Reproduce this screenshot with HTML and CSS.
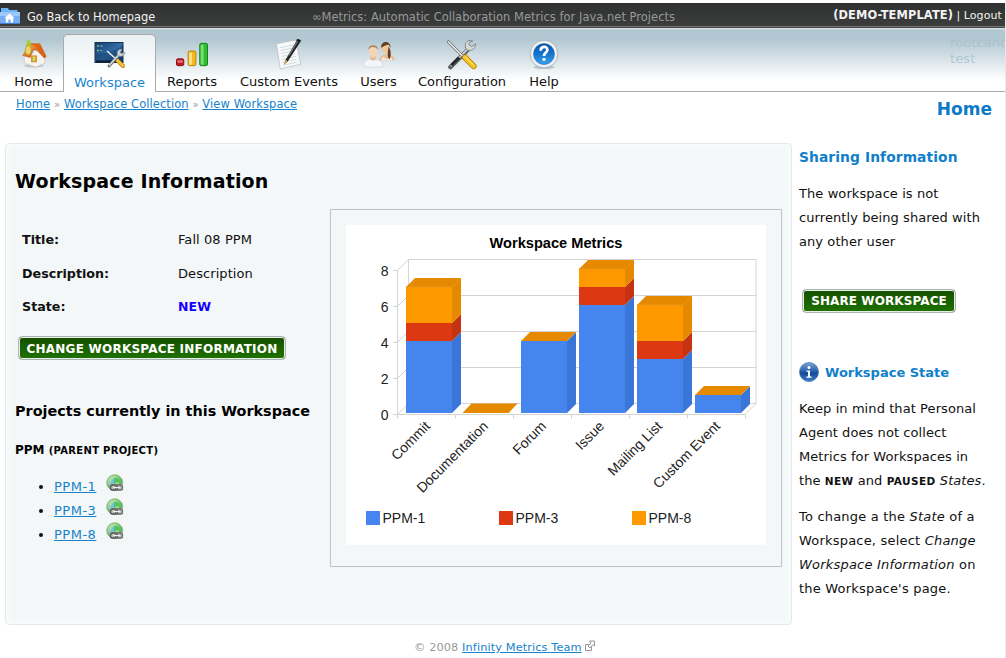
FILE: index.html
```html
<!DOCTYPE html>
<html lang="en">
<head>
<meta charset="utf-8">
<title>∞Metrics: View Workspace</title>
<link rel="stylesheet" href="styles.css">
</head>
<body>
<div class="page">
  <header class="topbar">
    <a class="back" href="#">
      <svg class="folder" width="20" height="18" viewBox="0 0 20 18">
        <path d="M1 1h7l1 2h8.500v4H1z" fill="#6eb3f5"/>
        <path d="M0 5h20v12H0z" fill="#76aef3"/>
        <path d="M0 5h20v4H0z" fill="#9cc8fa"/>
        <path d="M0 16.500h20" stroke="#3f7fd0"/>
        <path d="M9.500 6.500l5 4.500h-1.300v4.500h-2.500v-3H8.300v3H5.800V11H4.500z" fill="#fff"/>
      </svg>
      <span>Go Back to Homepage</span>
    </a>
    <span class="slogan">∞Metrics: Automatic Collaboration Metrics for Java.net Projects</span>
    <span class="account"><b>(DEMO-TEMPLATE)</b> | <a href="#">Logout</a></span>
  </header>

  <div class="header">
    <nav class="nav">
      <a class="item home" href="#">
        <svg width="32" height="32" viewBox="0 0 32 32">
          <defs><linearGradient id="roof" x2="1" y2="1"><stop stop-color="#f7b15e"/><stop offset=".6" stop-color="#e26a12"/><stop offset="1" stop-color="#b94709"/></linearGradient></defs>
          <ellipse cx="16" cy="27.500" rx="10" ry="2" fill="#a8b4b9" opacity=".6"/>
          <path d="M6 17l8 -1 3-5 10 8v6l-9 4-12-4z" fill="#f6f2ee" stroke="#c9c0b8" stroke-width=".6"/>
          <path d="M4.500 17L12 5l10 0 6.500 13-2 1.500-7-8L15 11l-3 8z" fill="url(#roof)" stroke="#b65217" stroke-width=".6"/>
          <path d="M12 5l10 0 6.500 13-2 .5L18 8z" fill="#dc6413"/>
          <rect x="13" y="17" width="6" height="7" fill="#d8842b"/>
          <rect x="14.500" y="18" width="3" height="5" fill="#c8dc58"/>
          <path d="M9 4c-1-4 3-4 3-1 2 0 1 2 0 3 2 2-1 3-3 2-2 0-2-3 0-4z" fill="#a6cf33"/>
          <ellipse cx="10" cy="11.500" rx="3" ry="4.500" fill="#f5cf6d" stroke="#a3ae2b"/>
        </svg>
        <span>Home</span>
      </a>
      <a class="item workspace active" href="#">
        <svg width="32" height="32" viewBox="0 0 32 32">
          <defs><linearGradient id="screen" x2="1" y2="1"><stop stop-color="#173e70"/><stop offset=".55" stop-color="#3370a8"/><stop offset="1" stop-color="#12345f"/></linearGradient></defs>
          <rect x="1" y="4.500" width="28" height="20" fill="url(#screen)" stroke="#173354"/>
          <path d="M1 16c10 0 20-3 28-9v17H1z" fill="#0f325f" opacity=".4"/>
          <path d="M2 23.500h20" stroke="#0b1c33" stroke-width="2"/>
          <path d="M3 8h2M3 12.500h2" stroke="#7cc56b" stroke-width="1.500"/><path d="M6 8h3M6 12.500h2" stroke="#86a8c8"/>
          <path d="M13 13l9 8" stroke="#eee" stroke-width="1.500"/>
          <path d="M23 22l6 6" stroke="#a97510" stroke-width="4" stroke-linecap="round"/>
          <path d="M23 22l6 6" stroke="#f6c52f" stroke-width="2.800" stroke-linecap="round"/>
          <path d="M15 28l10-11" stroke="#6d7479" stroke-width="3" stroke-linecap="round"/>
          <path d="M15 27.500l10-11" stroke="#d6dadc" stroke-width="1.600"/>
          <path d="M28 11.500c-4-1-6 3-4 6 3 2 7 0 7-3l-3 1-2-1z" fill="#cfd4d6" stroke="#858c90" stroke-width=".7"/>
        </svg>
        <span>Workspace</span>
      </a>
      <a class="item reports" href="#">
        <svg width="34" height="32" viewBox="0 0 34 32">
          <rect x="1" y="20.500" width="7.500" height="7" rx="1.500" fill="#c41827" stroke="#8b0713"/>
          <path d="M2 22h5.500v2.500H2z" fill="#ef8b91" opacity=".8"/>
          <rect x="13" y="12.500" width="8" height="15" rx="1.500" fill="#f0bb22" stroke="#bd8200"/>
          <path d="M14 14h3v12.500h-3z" fill="#ffe9a0" opacity=".8"/>
          <rect x="25" y="4.500" width="8" height="23" rx="1.500" fill="#31bb35" stroke="#118315"/>
          <path d="M26 6h3v20.500h-3z" fill="#8ae97c" opacity=".8"/>
        </svg>
        <span>Reports</span>
      </a>
      <a class="item events" href="#">
        <svg width="32" height="32" viewBox="0 0 32 32">
          <path d="M3 5l20-4 5 25-21 5z" fill="#f8f9f9" stroke="#b8bec1" stroke-width=".8"/>
          <path d="M6.500 9l15-3M7 12l15-3M8 15l14-3M8.500 18l14-3M9 21l14-3M9.500 24l14-3M10 27l14-3" stroke="#c9cfd3" stroke-width=".8"/>
          <path d="M11 26l1.500-4.500L24 1.500l4 1L14.500 23.500z" fill="#24272a"/>
          <path d="M10.500 26.500l2-5 2.300 1.600z" fill="#cda95c"/>
          <path d="M25 2l-9 15" stroke="#868c91"/><path d="M24 .8l4 1.200" stroke="#111" stroke-width="2"/>
        </svg>
        <span>Custom Events</span>
      </a>
      <a class="item users" href="#">
        <svg width="34" height="32" viewBox="0 0 34 32">
          <path d="M17 22c0-4 4-6 8-6s8 2 8 5v1z" fill="#e9bd8f"/>
          <path d="M19 22l2-4 4 3 4-3 2 4z" fill="#eceae8"/>
          <ellipse cx="24" cy="9.500" rx="4.200" ry="5.700" fill="#eec99b"/>
          <path d="M19 9c0-8 10-8 10 0l-2-3c-3 0-5 2-8 3z" fill="#654223"/>
          <path d="M27 8c2 3 3 8 1 13-3-2-2-8-1-13z" fill="#633b20"/>
          <path d="M1 28c0-6 4-7.500 9-7.500s11 2 11 7.500c-5 1.500-15 1.500-20 0z" fill="#f3f5fb" stroke="#ccd2de" stroke-width=".7"/>
          <path d="M8 17h6v4q-3 3-6 0z" fill="#e5bd99"/>
          <ellipse cx="11" cy="12.500" rx="4.700" ry="6.500" fill="#f3d5b8"/>
          <path d="M6 11c0-6 10-6 10 0l-2-2c-3-1-5-1-6 0z" fill="#a98462"/>
        </svg>
        <span>Users</span>
      </a>
      <a class="item config" href="#">
        <svg width="32" height="32" viewBox="0 0 32 32">
          <path d="M4 29L23 10" stroke="#595f63" stroke-width="4.500" stroke-linecap="round"/>
          <path d="M4.500 28L23 9" stroke="#c9cdcf" stroke-width="2"/>
          <path d="M5 27l8-8" stroke="#25292c" stroke-width="3"/>
          <path d="M27 2c-6-2-9 3-7 8 4 4 10 1 10-5l-4 3-3-2 1-3z" fill="#d8dbdc" stroke="#81878b"/>
          <path d="M2 3l16 16" stroke="#62676a" stroke-width="3" stroke-linecap="round"/>
          <path d="M2 3l16 16" stroke="#f5f6f6" stroke-width="1.500" stroke-linecap="round"/>
          <path d="M19 19l9 9" stroke="#a97808" stroke-width="6" stroke-linecap="round"/>
          <path d="M19 19l9 9" stroke="#f8c51e" stroke-width="4.500" stroke-linecap="round"/>
          <path d="M19 18l9 9" stroke="#ffe987"/>
        </svg>
        <span>Configuration</span>
      </a>
      <a class="item help" href="#">
        <svg width="32" height="32" viewBox="0 0 32 32">
          <defs><linearGradient id="disc" x2="0" y2="1"><stop stop-color="#0e50a8"/><stop offset=".5" stop-color="#1475d0"/><stop offset="1" stop-color="#36a5ee"/></linearGradient></defs>
          <ellipse cx="16" cy="29" rx="11" ry="2" fill="#8999a3" opacity=".5"/>
          <circle cx="16" cy="15.500" r="14.300" fill="#eef1f3" stroke="#aab5bc"/>
          <circle cx="16" cy="15.500" r="10.800" fill="url(#disc)" stroke="#1662ad" stroke-width=".6"/>
          <path d="M12.500 12c0-5 7-5 7-1 0 3-3.500 3-3.500 6.500" fill="none" stroke="#fff" stroke-width="2.700"/>
          <circle cx="16" cy="21" r="1.700" fill="#fff"/>
        </svg>
        <span>Help</span>
      </a>
    </nav>
    <div class="ghost"><span class="clip">rootcand</span><span>test</span></div>
  </div>

  <div class="crumbs">
    <div class="trail"><a href="#">Home</a> <i>»</i> <a href="#">Workspace Collection</a> <i>»</i> <a href="#">View Workspace</a></div>
    <div class="pagename">Home</div>
  </div>

  <div class="content">
    <main class="panel">
      <h1>Workspace Information</h1>
      <div class="columns">
        <div class="details">
          <dl class="facts">
            <dt>Title:</dt><dd>Fall 08 PPM</dd>
            <dt>Description:</dt><dd>Description</dd>
            <dt>State:</dt><dd class="new">NEW</dd>
          </dl>
          <button class="btn wide">CHANGE WORKSPACE INFORMATION</button>
          <h2>Projects currently in this Workspace</h2>
          <h3>PPM <small>(PARENT PROJECT)</small></h3>
          <svg class="sprite" width="0" height="0">
            <defs><radialGradient id="orb" cx=".4" cy=".35"><stop stop-color="#c4ecbb"/><stop offset=".7" stop-color="#93d08f"/><stop offset="1" stop-color="#6cae66"/></radialGradient></defs>
            <symbol id="globe" viewBox="0 0 18 18">
              <circle cx="8.700" cy="8.700" r="8" fill="url(#orb)" stroke="#87b878" stroke-width=".8"/>
              <path d="M3 12c2-5 3-8 7-8l2 3-5 3-2 4z" fill="#7dbbdc"/>
              <path d="M8 4c4-1 7 2 7 5l-4-1-3 2z" fill="#4fc85b"/>
              <path d="M4 10.500h13v6H4z" fill="#b9c0b9"/>
              <rect x="4.500" y="11" width="7" height="5" rx="2.300" fill="none" stroke="#555" stroke-width="1.300"/>
              <rect x="9.500" y="11" width="7" height="5" rx="2.300" fill="none" stroke="#6c6c6c" stroke-width="1.300"/>
              <path d="M7 13.500h7" stroke="#eee" stroke-width="1.200"/>
            </symbol>
          </svg>
          <ul class="projects">
            <li><a href="#">PPM-1</a><svg width="18" height="18"><use href="#globe"/></svg></li>
            <li><a href="#">PPM-3</a><svg width="18" height="18"><use href="#globe"/></svg></li>
            <li><a href="#">PPM-8</a><svg width="18" height="18"><use href="#globe"/></svg></li>
          </ul>
        </div>
        <div class="frame">
          <svg class="chart" width="420" height="320" viewBox="346 225 420 320">
            <rect x="345" y="225" width="422" height="320" fill="#fff"/>
            <text class="title" x="556" y="248" text-anchor="middle">Workspace Metrics</text>
            <path class="grid" d="M408.500 259.500H756V403.500H408.500zM408.500 295.500H756M408.500 331.500H756M408.500 367.500H756M397.500 270.500V414.500H745M393 270.500h4.500l11-11M393 306.500h4.500l11-11M393 342.500h4.500l11-11M393 378.500h4.500l11-11M393 414.500h4.500l11-11M745 414.500l11-11M397.500 414.500v4M455.500 414.500v4M513.500 414.500v4M571.500 414.500v4M629.500 414.500v4M687.500 414.500v4M745.500 414.500v4"/>
            <g class="num" text-anchor="end"><text x="388.500" y="276">8</text><text x="388.500" y="312">6</text><text x="388.500" y="348">4</text><text x="388.500" y="384">2</text><text x="388.500" y="420">0</text></g>
            <g class="blue"><path d="M406 341h46v72h-46zM521 341h46v72h-46zM579 305h46v108h-46zM637 359h46v54h-46zM695 395h46v18h-46z"/></g>
            <g class="blue-side"><path d="M452 341l9-9v72l-9 9zM567 341l9-9v72l-9 9zM625 305l9-9v108l-9 9zM683 359l9-9v54l-9 9zM741 395l9-9v18l-9 9z"/></g>
            <g class="red"><path d="M406 323h46v18h-46zM579 287h46v18h-46zM637 341h46v18h-46z"/></g>
            <g class="red-side"><path d="M452 323l9-9v18l-9 9zM625 287l9-9v18l-9 9zM683 341l9-9v18l-9 9z"/></g>
            <g class="orange"><path d="M406 287h46v36h-46zM579 269h46v18h-46zM637 305h46v36h-46z"/></g>
            <g class="orange-side"><path d="M452 287l9-9v36l-9 9zM625 269l9-9v18l-9 9zM683 305l9-9v36l-9 9zM406 287l9-9h46l-9 9zM462.500 413l9-9.500h46l-9 9.500zM521 341l9-9h46l-9 9zM579 269l9-9h46l-9 9zM637 305l9-9h46l-9 9zM695 395l9-9h46l-9 9z"/></g>
            <path d="M406 287h46l9-9M579 269h46l9-9M637 305h46l9-9" fill="none" stroke="#e8961c"/>
            <g class="lab" text-anchor="end">
              <text transform="translate(431 427) rotate(-45)">Commit</text>
              <text transform="translate(489 427) rotate(-45)">Documentation</text>
              <text transform="translate(547 427) rotate(-45)">Forum</text>
              <text transform="translate(605 427) rotate(-45)">Issue</text>
              <text transform="translate(663 427) rotate(-45)">Mailing List</text>
              <text transform="translate(721 427) rotate(-45)">Custom Event</text>
            </g>
            <g class="lab">
              <rect x="366" y="511" width="14" height="14" fill="#4684ee"/><text x="382.500" y="523">PPM-1</text>
              <rect x="499" y="511" width="14" height="14" fill="#dc3912"/><text x="515.500" y="523">PPM-3</text>
              <rect x="632" y="511" width="14" height="14" fill="#ff9900"/><text x="648.500" y="523">PPM-8</text>
            </g>
          </svg>
        </div>
      </div>
    </main>

    <aside class="side">
      <h4>Sharing Information</h4>
      <p>The workspace is not<br>currently being shared with<br>any other user</p>
      <button class="btn share">SHARE WORKSPACE</button>
      <h4 class="state">
        <svg width="20" height="20" viewBox="0 0 20 20">
          <defs><linearGradient id="info" x2="0" y2="1"><stop stop-color="#7ea4d8"/><stop offset=".5" stop-color="#2059a7"/><stop offset=".55" stop-color="#124a98"/><stop offset="1" stop-color="#3d7fc8"/></linearGradient></defs>
          <circle cx="10" cy="10" r="9.500" fill="url(#info)" stroke="#416fa8" stroke-width=".7"/>
          <circle cx="10" cy="5.500" r="1.500" fill="#fff"/><path d="M7.500 8.500H11v6h1.700v1.300H7.300v-1.300H9V9.800H7.500z" fill="#fff"/>
        </svg>
        <span>Workspace State</span>
      </h4>
      <p class="mind">Keep in mind that Personal<br>Agent does not collect<br>Metrics for Workspaces in<br>the <b>NEW</b> and <b>PAUSED</b> <em>States</em>.</p>
      <p class="change">To change a the <em>State</em> of a<br>Workspace, select <em>Change<br>Workspace Information</em> on<br>the Workspace's page.</p>
    </aside>
  </div>

  <footer class="footer">© 2008 <a href="#">Infinity Metrics Team</a><svg width="12" height="12" viewBox="0 0 12 12"><path d="M1.500 4.500h6v6h-6z" fill="#fff" stroke="#999"/><path d="M5.500 1h5v5L9 4.700 6 8 4 6l3-3z" fill="#fff" stroke="#999"/></svg></footer>
</div>
</body>
</html>
```
FILE: styles.css
```css
* { box-sizing: border-box; }
body { margin: 0; background: #fff; color: #111; font-family: "DejaVu Sans", Verdana, sans-serif; font-size: 13px; }
h1, h2, h3, h4, p, ul, dl, dd { margin: 0; padding: 0; }
h1, h2, h3 { color: #000; }
.page { width: 1006px; height: 658px; padding-top: 3px; border-right: 1px solid #e8e8e8; overflow: hidden; }

.topbar { display: flex; height: 25px; background: linear-gradient(#303131, #3c3d3d); border-bottom: 1px solid #434444; box-shadow: inset 0 -1px #777; color: #f2f2f2; font-size: 11.450px; line-height: 28px; }
.topbar a { color: inherit; text-decoration: none; }
.back { display: flex; width: 312px; gap: 7px; }
.folder { margin-top: 4px; }
.slogan { flex: 1; color: #999; letter-spacing: .04px; white-space: nowrap; }
.account { padding-right: 3px; line-height: 25px; font-size: 11px; white-space: nowrap; }
.account b { font-size: 11.400px; letter-spacing: .13px; }
.account a { letter-spacing: .1px; }

.header { display: flex; justify-content: space-between; height: 64px; background: linear-gradient(#e5ecef 0, #b1c7d1 2px, #b1c7d1 11px, #fff 52px); border-bottom: 1px solid #aaa; }
.nav { display: flex; padding: 6px 0 0 4px; }
.item { display: flex; flex-direction: column; align-items: center; height: 57px; padding-top: 5px; color: #111; text-decoration: none; font-size: 13px; line-height: 18px; }
.item svg { height: 32px; }
.item span { margin-top: 3px; white-space: nowrap; }
.home { width: 59px; }
.workspace { width: 93px; }
.active { height: 58px; padding-top: 4px; border: 1px solid #aaa; border-bottom: 0; border-radius: 5px 5px 0 0; background: linear-gradient(#e9f0f3, #fff 70%); color: #1b85cf; }
.active svg { margin-top: -1px; margin-bottom: 1px; }
.reports { width: 72px; }
.events { width: 122px; }
.users { width: 57px; }
.config { width: 110px; }
.help { width: 54px; }
.ghost { display: flex; flex-direction: column; width: 55px; padding-top: 7px; color: #b0c8d4; line-height: 16px; letter-spacing: .1px; }
.clip { overflow: hidden; color: #a8c2ce; }

.crumbs { display: flex; justify-content: space-between; height: 51px; padding: 3px 13px 0 16px; }
.trail { font-size: 11.450px; line-height: 18px; letter-spacing: .1px; color: #999; }
.trail i { font-style: normal; font-size: 10px; }
a { color: #1683cc; }
.pagename { padding-top: 2px; color: #0c7ac6; font-size: 17px; line-height: 24px; font-weight: bold; }

.content { display: flex; height: 482px; padding-left: 5px; }
.panel { width: 787px; padding: 25px 9px 0; background: #f3f7f8; border: 1px solid #e3eaee; border-radius: 4px; box-shadow: inset 0 0 5px 3px #fafcfc; }
h1 { height: 40px; font-size: 19px; line-height: 24px; letter-spacing: .17px; }
.columns { display: flex; }
.details { width: 315px; padding-top: 14px; }
.facts { display: grid; grid-template-columns: 156px 1fr; grid-auto-rows: 33.500px; padding-left: 7px; line-height: 33px; }
dt { font-weight: bold; font-size: 12.700px; }
dd { letter-spacing: .08px; }
.new { color: #1500ff; font-weight: bold; font-size: 12.500px; }
.btn { display: block; height: 24px; padding: 0; border: 1px solid #a8b4b0; border-radius: 4px; background: linear-gradient(#154f00, #1f7200); box-shadow: inset 0 0 0 1px #e8efe8; color: #fff; font: bold 12px/22px "DejaVu Sans", Verdana, sans-serif; letter-spacing: .1px; white-space: nowrap; }
.wide { width: 268px; margin: 12px 0 0 3px; padding-top: 1px; letter-spacing: .23px; }
h2 { margin-top: 41px; font-size: 14.400px; line-height: 20px; white-space: nowrap; }
h3 { margin-top: 19px; font-size: 12px; line-height: 20px; }
h3 small { font-size: 10px; letter-spacing: .3px; }
.sprite { display: block; }
.projects { margin-top: 13px; padding-left: 39px; line-height: 24px; }
.projects li { height: 24px; }
.projects a { letter-spacing: .5px; }
.projects svg { margin-left: 10px; vertical-align: -1px; }
.frame { width: 452px; height: 358px; padding: 15px 15px; border: 1px solid #bfc4c6; }
.chart { display: block; font-family: "Liberation Sans", Arial, sans-serif; }
.title { font-size: 14.600px; font-weight: bold; fill: #000; }
.num { font-size: 14px; fill: #222; }
.lab { font-size: 14px; fill: #222; }
.grid { fill: none; stroke: #d4d4d4; }
.blue { fill: #4684ee; }
.blue-side { fill: #3a76d8; }
.red { fill: #dc3912; }
.red-side { fill: #c63310; }
.orange { fill: #ff9900; }
.orange-side { fill: #e58900; }

.side { width: 212px; padding: 2px 0 0 7px; line-height: 24px; white-space: nowrap; }
h4 { height: 24px; color: #1180ca; font-size: 13.800px; line-height: 24px; letter-spacing: .1px; }
.side p { margin-top: 13px; letter-spacing: .08px; }
.share { width: 154px; margin: 35px 0 0 3px; }
.state { display: flex; gap: 6px; margin-top: 48px; font-size: 13px; letter-spacing: 0; }
.state svg { margin-top: 1px; }
.side .mind { margin-top: 12px; }
.side .change { margin-top: 12px; letter-spacing: .2px; }
.side b { font-size: 10.500px; letter-spacing: .4px; }
.footer { padding-left: 414px; color: #999; font-size: 11.300px; letter-spacing: .12px; line-height: 14px; margin-top: 15px; }
.footer svg { margin-left: 2px; vertical-align: -1px; }
```
